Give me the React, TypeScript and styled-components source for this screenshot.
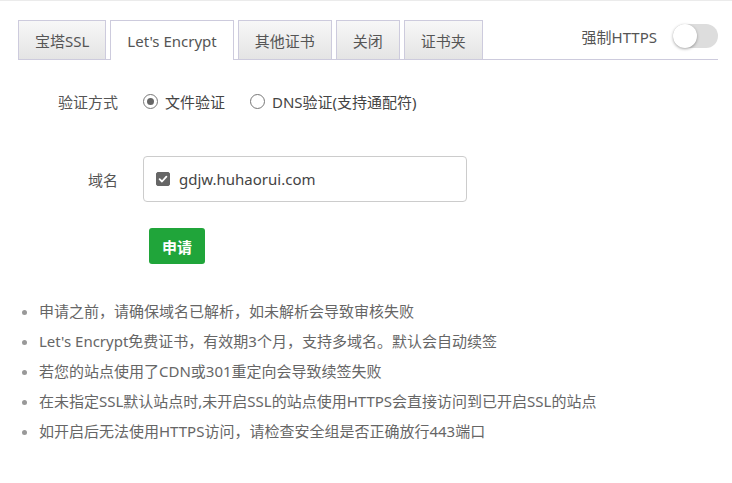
import React, { useState } from 'react';
import styled, { createGlobalStyle } from 'styled-components';

const GlobalStyle = createGlobalStyle`
  html, body {
    margin: 0;
    padding: 0;
    background: #fff;
  }
  body {
    font-family: "Noto Sans", "Noto Sans CJK SC", sans-serif;
    color: #555;
  }
`;

const tabs = ['宝塔SSL', "Let's Encrypt", '其他证书', '关闭', '证书夹'];

const tips = [
  '申请之前，请确保域名已解析，如未解析会导致审核失败',
  "Let's Encrypt免费证书，有效期3个月，支持多域名。默认会自动续签",
  '若您的站点使用了CDN或301重定向会导致续签失败',
  '在未指定SSL默认站点时,未开启SSL的站点使用HTTPS会直接访问到已开启SSL的站点',
  '如开启后无法使用HTTPS访问，请检查安全组是否正确放行443端口',
];

const App = () => {
  const [active, setActive] = useState(1);
  const [mode, setMode] = useState<'file' | 'dns'>('file');
  const [checked, setChecked] = useState(true);

  return (
    <Page>
      <GlobalStyle />
      <TabBar>
        {tabs.map((t, i) => (
          <Tab key={t} $active={i === active} onClick={() => setActive(i)}>
            {t}
          </Tab>
        ))}
        <ForceHttps>
          <span>强制HTTPS</span>
          <Switch />
        </ForceHttps>
      </TabBar>

      <Form>
        <Row>
          <Label>验证方式</Label>
          <RadioGroup>
            <RadioItem onClick={() => setMode('file')}>
              <Radio $on={mode === 'file'} />
              文件验证
            </RadioItem>
            <RadioItem onClick={() => setMode('dns')}>
              <Radio $on={mode === 'dns'} />
              DNS验证(支持通配符)
            </RadioItem>
          </RadioGroup>
        </Row>

        <DomainRow>
          <Label>域名</Label>
          <DomainBox>
            <CheckItem onClick={() => setChecked(!checked)}>
              <CheckBox $on={checked}>
                {checked && (
                  <svg width="10" height="10" viewBox="0 0 10 10">
                    <path d="M1.6 5.2 L4 7.5 L8.4 2.6" fill="none" stroke="#fff" strokeWidth="1.8" strokeLinecap="round" strokeLinejoin="round" />
                  </svg>
                )}
              </CheckBox>
              gdjw.huhaorui.com
            </CheckItem>
          </DomainBox>
        </DomainRow>

        <ButtonRow>
          <Label />
          <ApplyButton>申请</ApplyButton>
        </ButtonRow>
      </Form>

      <Tips>
        {tips.map((t) => (
          <li key={t}>{t}</li>
        ))}
      </Tips>
    </Page>
  );
};

export default App;

const Page = styled.div`
  border-top: 1px solid #ebebeb;
  padding: 19px 14px 0 18px;
`;

const TabBar = styled.div`
  display: flex;
  align-items: flex-start;
  gap: 4px;
  height: 39px;
  border-bottom: 1px solid #cdcbdd;
`;

const Tab = styled.div<{ $active: boolean }>`
  height: 39px;
  box-sizing: border-box;
  padding: 0 16px;
  display: flex;
  align-items: center;
  font-size: 15px;
  color: #555;
  cursor: pointer;
  border: 1px solid #cdcbdd;
  border-bottom: none;
  background: ${(p) =>
    p.$active ? '#fff' : 'linear-gradient(to bottom, #f7f7f7, #e4e4e4)'};
  ${(p) => p.$active && 'height: 40px; position: relative; z-index: 1;'}
`;

const ForceHttps = styled.div`
  margin-left: auto;
  display: flex;
  align-items: center;
  gap: 16px;
  height: 30px;
  margin-top: 1px;
  font-size: 15px;
  color: #555;
`;

const Switch = styled.div`
  width: 45px;
  height: 24px;
  border-radius: 12px;
  background: #ddd;
  position: relative;

  &::after {
    content: '';
    position: absolute;
    left: 0;
    top: 0;
    width: 24px;
    height: 24px;
    border-radius: 50%;
    background: #fff;
    box-shadow: 0 1px 3px rgba(0, 0, 0, 0.35);
  }
`;

const Form = styled.div`
  margin-top: 30px;
  display: flex;
  flex-direction: column;
`;

const Row = styled.div`
  display: flex;
  align-items: center;
  gap: 25px;
  height: 22px;
`;

const DomainRow = styled(Row)`
  margin-top: 44px;
  height: 46px;
`;

const ButtonRow = styled(Row)`
  margin-top: 26px;
  height: 36px;
`;

const Label = styled.div`
  width: 100px;
  text-align: right;
  font-size: 15px;
  color: #555;
`;

const RadioGroup = styled.div`
  display: flex;
  align-items: center;
  gap: 25px;
`;

const RadioItem = styled.label`
  display: flex;
  align-items: center;
  gap: 7px;
  font-size: 15px;
  color: #444;
  cursor: pointer;
`;

const Radio = styled.span<{ $on: boolean }>`
  width: 15px;
  height: 15px;
  box-sizing: border-box;
  border-radius: 50%;
  border: 1px solid #777;
  background: #fff;
  display: flex;
  align-items: center;
  justify-content: center;

  &::after {
    content: '';
    width: 7px;
    height: 7px;
    border-radius: 50%;
    background: ${(p) => (p.$on ? '#666' : 'transparent')};
  }
`;

const DomainBox = styled.div`
  width: 324px;
  height: 46px;
  box-sizing: border-box;
  border: 1px solid #ccc;
  border-radius: 4px;
  display: flex;
  align-items: center;
  padding: 0 12px;
`;

const CheckItem = styled.label`
  display: flex;
  align-items: center;
  gap: 9px;
  font-size: 15px;
  color: #444;
  cursor: pointer;
`;

const CheckBox = styled.span<{ $on: boolean }>`
  width: 14px;
  height: 14px;
  border-radius: 2px;
  box-sizing: border-box;
  background: ${(p) => (p.$on ? '#666' : '#fff')};
  border: 1px solid #666;
  display: flex;
  align-items: center;
  justify-content: center;
`;

const ApplyButton = styled.button`
  margin-left: 6px;
  width: 56px;
  height: 36px;
  border: none;
  border-radius: 3px;
  background: #20a53a;
  color: #fff;
  font-family: inherit;
  font-size: 15px;
  font-weight: bold;
  cursor: pointer;
`;

const Tips = styled.ul`
  margin: 32px 0 0;
  padding-left: 21px;
  font-size: 15px;
  color: #666;
  line-height: 30px;

  li::marker {
    color: #999;
  }
`;
